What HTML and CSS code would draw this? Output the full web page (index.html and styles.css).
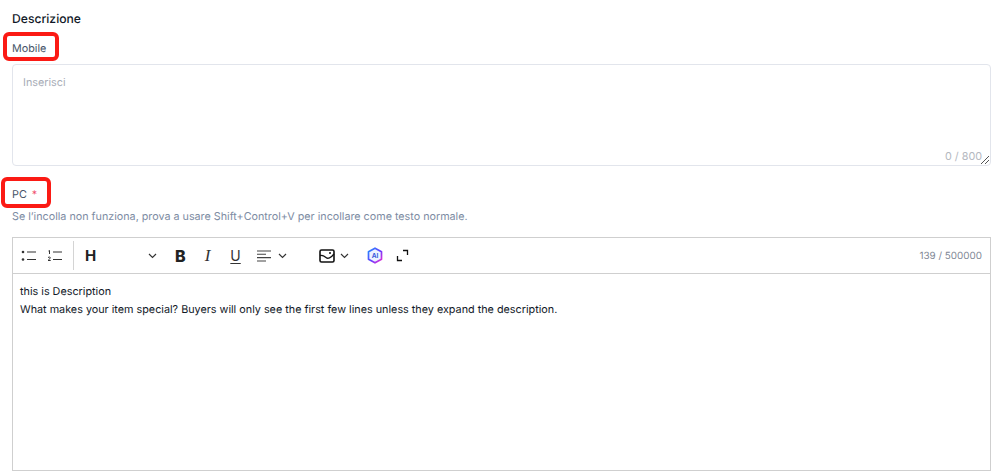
FILE: index.html
```html
<!DOCTYPE html>
<html lang="it">
<head>
<meta charset="utf-8">
<title>Descrizione</title>
<link rel="stylesheet" href="styles.css">
</head>
<body>
<main class="page">
  <h2 class="title">Descrizione</h2>
  <div class="label label-mobile"><span class="mark mark-mobile"></span>Mobile</div>
  <div class="textarea-box">
    <span class="placeholder">Inserisci</span>
    <span class="count">0 / 800</span>
    <svg class="grip" width="10" height="10" viewBox="0 0 10 10"><path d="M9 1 1 9M9 5 5 9" stroke="#555" stroke-width="1" fill="none"/></svg>
  </div>
  <div class="label label-pc"><span class="mark mark-pc"></span>PC <span class="req">*</span></div>
  <p class="hint">Se l’incolla non funziona, prova a usare Shift+Control+V per incollare come testo normale.</p>
  <section class="editor">
    <div class="toolbar">
      <button class="tool tool-first" aria-label="Elenco puntato">
        <svg width="16" height="12" viewBox="0 0 16 12"><circle cx="2" cy="2" r="1.300" fill="#333"/><circle cx="2" cy="9.500" r="1.300" fill="#333"/><path d="M6 2h9M6 9.500h9" stroke="#333" stroke-width="1.100"/></svg>
      </button>
      <button class="tool" aria-label="Elenco numerato">
        <svg width="16" height="12" viewBox="0 0 16 12"><path d="M1.500 1 2.500.5V4M1 7.500Q2.500 6.500 3.300 7.500 3.500 8.500 1 10.500H3.700M6 2h9M6 9.500h9" stroke="#333" stroke-width="1" fill="none"/></svg>
      </button>
      <span class="sep"></span>
      <button class="tool-heading" aria-label="Titolo">
        <span class="h-glyph">H</span>
        <svg width="9" height="6" viewBox="0 0 9 6"><path d="M1 1l3.500 3.500L8 1" stroke="#333" stroke-width="1.200" fill="none"/></svg>
      </button>
      <button class="tool-b">B</button>
      <button class="tool-i">I</button>
      <button class="tool-u">U</button>
      <button class="tool-align" aria-label="Allinea">
        <svg width="14" height="12" viewBox="0 0 14 12"><path d="M0 1h14M0 4.300h9M0 7.600h14M0 11h9" stroke="#444" stroke-width="1.100"/></svg>
        <svg width="9" height="6" viewBox="0 0 9 6"><path d="M1 1l3.500 3.500L8 1" stroke="#333" stroke-width="1.200" fill="none"/></svg>
      </button>
      <button class="tool-image" aria-label="Immagine">
        <svg width="16" height="14" viewBox="0 0 16 14"><rect x="1" y="1" width="14" height="12" rx="1.500" stroke="#111" stroke-width="1.600" fill="none"/><path d="M1 6.500Q4 6 7 8.500T15 5" stroke="#111" stroke-width="1.300" fill="none"/><circle cx="11" cy="4" r="1" fill="#111"/></svg>
        <svg width="9" height="6" viewBox="0 0 9 6"><path d="M1 1l3.500 3.500L8 1" stroke="#333" stroke-width="1.200" fill="none"/></svg>
      </button>
      <button class="tool-ai" aria-label="AI">
        <svg width="16" height="17" viewBox="0 0 16 17"><defs><linearGradient id="aig" x1="0" y1="0" x2="1" y2="1"><stop offset="0" stop-color="#1e90ff"/><stop offset=".55" stop-color="#6a3cff"/><stop offset="1" stop-color="#f02fd0"/></linearGradient></defs><path d="M8 1.200 14.500 4.800V12.200L8 15.800 1.500 12.200V4.800Z" fill="#eef3ff" stroke="url(#aig)" stroke-width="1.700" stroke-linejoin="round"/><text x="8" y="11" text-anchor="middle" class="ai-text">AI</text></svg>
      </button>
      <button class="tool-expand" aria-label="Espandi">
        <svg width="13" height="13" viewBox="0 0 13 13"><path d="M7 1.500h4.500V6M6 11.500H1.500V7" stroke="#111" stroke-width="1.300" fill="none"/></svg>
      </button>
      <span class="tool-count">139 / 500000</span>
    </div>
    <div class="content">
      <p>this is Description</p>
      <p>What makes your item special? Buyers will only see the first few lines unless they expand the description.</p>
    </div>
  </section>
</main>
</body>
</html>
```
FILE: styles.css
```css
* { box-sizing: border-box; }
html, body { margin: 0; padding: 0; background: #fff; }
body { font-family: Inter, "Liberation Sans", sans-serif; font-size: 12px; color: #1a2233; overflow: hidden; text-rendering: geometricPrecision; }
p, h2 { margin: 0; }
button { border: 0; background: none; padding: 0; margin: 0; font: inherit; color: inherit; display: flex; align-items: center; }
.page { width: 999px; height: 474px; padding: 11px 8px 0 12px; display: flex; flex-direction: column; }
.title { font-size: 12.150px; line-height: 16px; font-weight: 500; color: #111827; }
.label { position: relative; font-size: 10.800px; line-height: 16px; color: #475569; }
.label-mobile { margin-top: 14px; }
.label-pc { margin-top: 21px; }
.req { color: #f0506e; margin-left: 2px; }
.mark { position: absolute; border: 4px solid #fb1a14; border-radius: 6px; }
.mark-mobile { left: -9px; top: -9px; width: 56px; height: 29px; }
.mark-pc { left: -11px; top: -10px; width: 50px; height: 31px; }
.textarea-box { position: relative; margin-top: 7px; height: 102px; border: 1px solid #e2e5ec; border-radius: 4px; }
.placeholder { position: absolute; left: 10px; top: 11px; font-size: 10.800px; line-height: 14px; color: #a8adb7; }
.count { position: absolute; right: 8px; bottom: 1px; font-size: 10.800px; line-height: 14px; color: #b4b8c0; }
.grip { position: absolute; right: 0; bottom: 0; }
.hint { margin-top: 7px; font-size: 10.750px; line-height: 14px; color: #7d8ca3; }
.editor { margin-top: 13px; height: 234px; border: 1px solid #cfcfcf; display: flex; flex-direction: column; }
.toolbar { height: 36px; border-bottom: 1px solid #cfcfcf; display: flex; align-items: center; flex-shrink: 0; }
.tool { width: 16px; justify-content: center; margin-left: 10px; }
.tool-first { margin-left: 8px; }
.sep { width: 1px; height: 29px; background: #d4d4d4; margin-left: 10px; }
.tool-heading { margin-left: 11px; width: 72px; justify-content: space-between; }
.h-glyph { font-size: 15px; font-weight: 700; color: #222; line-height: 16px; }
.tool-b { margin-left: 18px; font-size: 16px; font-weight: 800; color: #222; }
.tool-i { margin-left: 19px; font-family: "Liberation Serif", serif; font-style: italic; font-size: 17px; color: #333; }
.tool-u { margin-left: 20px; font-size: 14px; color: #333; text-decoration: underline; text-underline-offset: 2px; }
.tool-align { margin-left: 16px; gap: 7px; }
.tool-image { margin-left: 32px; gap: 5px; }
.tool-ai { margin-left: 18px; }
.ai-text { font-family: Inter, sans-serif; font-size: 6.500px; font-weight: 700; fill: #3b5bdb; }
.tool-expand { margin-left: 13px; }
.tool-count { margin-left: auto; margin-right: 8px; font-size: 9.900px; color: #7f8896; }
.content { padding: 9px 7px; font-size: 10.800px; line-height: 18px; color: #111827; }
```
